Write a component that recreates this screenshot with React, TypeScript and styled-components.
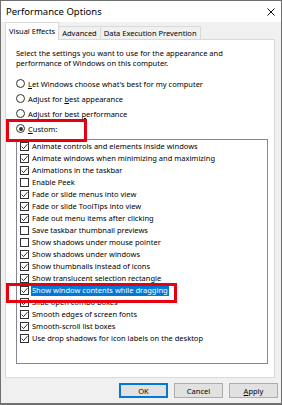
import styled, { createGlobalStyle } from "styled-components"

const GlobalStyle = createGlobalStyle`
  html, body {
    margin: 0;
    padding: 0;
    background: #ffffff;
  }
  body {
    font-family: "Noto Sans", "Open Sans", sans-serif;
    color: #000;
  }
`

const Window = styled.div`
  position: relative;
  box-sizing: border-box;
  width: 282px;
  height: 405px;
  border: 1px solid #6f6f6f;
  border-bottom-width: 2px;
  background: #f0f0f0;
  display: flex;
  flex-direction: column;
  overflow: hidden;
`

const TitleBar = styled.div`
  height: 21px;
  background: #ffffff;
  display: flex;
  align-items: center;
  justify-content: space-between;
  padding: 0 6px 0 5px;
  font-size: 9.5px;
`

const Body = styled.div`
  flex: 1;
  display: flex;
  flex-direction: column;
  padding: 1px 3px 0 4px;
`

const Tabs = styled.div`
  display: flex;
  align-items: flex-end;
  height: 17px;
  margin-bottom: -1px;
  position: relative;
  z-index: 1;
`

const Tab = styled.div<{ $active?: boolean }>`
  box-sizing: border-box;
  height: ${(p) => (p.$active ? "18px" : "14px")};
  padding: 0 3px;
  display: flex;
  align-items: center;
  justify-content: center;
  font-size: 7.5px;
  white-space: nowrap;
  background: ${(p) => (p.$active ? "#ffffff" : "#f0f0f0")};
  border: 1px solid #d9d9d9;
  border-bottom: ${(p) => (p.$active ? "none" : "1px solid #d9d9d9")};
  margin-left: ${(p) => (p.$active ? "0" : "-1px")};
  padding-bottom: ${(p) => (p.$active ? "2px" : "0")};
`

const Panel = styled.div`
  box-sizing: border-box;
  height: 339px;
  margin-right: 3px;
  background: #ffffff;
  border: 1px solid #d9d9d9;
  padding: 8px 6px 0 10px;
  display: flex;
  flex-direction: column;
`

const Intro = styled.p`
  margin: 0 0 8px;
  font-size: 7.5px;
  line-height: 10px;
`

const RadioRow = styled.div`
  height: 15px;
  display: flex;
  align-items: center;
  gap: 3px;
  font-size: 7.5px;
`

const Radio = styled.span<{ $on?: boolean }>`
  box-sizing: border-box;
  width: 9px;
  height: 9px;
  border-radius: 50%;
  border: 1px solid #333;
  background: #fff;
  display: flex;
  align-items: center;
  justify-content: center;

  &::after {
    content: "";
    width: 4px;
    height: 4px;
    border-radius: 50%;
    background: ${(p) => (p.$on ? "#333" : "transparent")};
  }
`

const Key = styled.span`
  text-decoration: underline;
`

const List = styled.div`
  box-sizing: border-box;
  margin-top: 3px;
  height: 225px;
  border: 1px solid #828790;
  padding: 0 0 0 3px;
`

const Item = styled.div`
  height: 12px;
  display: flex;
  align-items: center;
  gap: 2px;
  font-size: 7.5px;
  white-space: nowrap;
`

const Box = styled.span`
  box-sizing: border-box;
  flex: none;
  width: 9px;
  height: 9px;
  border: 1px solid #333;
  background: #fff;
  display: flex;
  align-items: center;
  justify-content: center;
`

const Label = styled.span<{ $selected?: boolean }>`
  padding: 0 1px;
  line-height: 11px;
  background: ${(p) => (p.$selected ? "#0078d7" : "transparent")};
  color: ${(p) => (p.$selected ? "#fff" : "#000")};
`

const Footer = styled.div`
  display: flex;
  justify-content: flex-end;
  gap: 6px;
  padding-top: 5px;
`

const Button = styled.button<{ $default?: boolean }>`
  box-sizing: border-box;
  width: 49px;
  height: 15px;
  padding: 0;
  font-family: inherit;
  font-size: 7.5px;
  color: #000;
  background: #e1e1e1;
  border: ${(p) => (p.$default ? "1px solid #0078d7" : "1px solid #adadad")};
  box-shadow: ${(p) => (p.$default ? "inset 0 0 0 1px #0078d7" : "none")};
`

const Marker = styled.div<{ $x: number; $y: number; $w: number; $h: number }>`
  position: absolute;
  left: ${(p) => p.$x}px;
  top: ${(p) => p.$y}px;
  width: ${(p) => p.$w}px;
  height: ${(p) => p.$h}px;
  box-sizing: border-box;
  border: 3px solid #e8000e;
  pointer-events: none;
`

const items = [
  { text: "Animate controls and elements inside windows", on: true },
  { text: "Animate windows when minimizing and maximizing", on: true },
  { text: "Animations in the taskbar", on: true },
  { text: "Enable Peek", on: false },
  { text: "Fade or slide menus into view", on: true },
  { text: "Fade or slide ToolTips into view", on: true },
  { text: "Fade out menu items after clicking", on: true },
  { text: "Save taskbar thumbnail previews", on: false },
  { text: "Show shadows under mouse pointer", on: false },
  { text: "Show shadows under windows", on: true },
  { text: "Show thumbnails instead of icons", on: true },
  { text: "Show translucent selection rectangle", on: true },
  { text: "Show window contents while dragging", on: true, selected: true },
  { text: "Slide open combo boxes", on: true },
  { text: "Smooth edges of screen fonts", on: true },
  { text: "Smooth-scroll list boxes", on: true },
  { text: "Use drop shadows for icon labels on the desktop", on: true },
]

function Check() {
  return (
    <svg width="7" height="7" viewBox="0 0 7 7">
      <path d="M0.6 3.6 L2.6 5.6 L6.4 1.2" fill="none" stroke="#333" strokeWidth="1" />
    </svg>
  )
}

function CloseIcon() {
  return (
    <svg width="8" height="8" viewBox="0 0 8 8">
      <path d="M0.5 0.5 L7.5 7.5 M7.5 0.5 L0.5 7.5" stroke="#111" strokeWidth="1" />
    </svg>
  )
}

export default function App() {
  return (
    <>
      <GlobalStyle />
      <Window>
        <TitleBar>
          <span>Performance Options</span>
          <CloseIcon />
        </TitleBar>
        <Body>
          <Tabs>
            <Tab $active>Visual Effects</Tab>
            <Tab>Advanced</Tab>
            <Tab>Data Execution Prevention</Tab>
          </Tabs>
          <Panel>
            <Intro>
              Select the settings you want to use for the appearance and
              <br />
              performance of Windows on this computer.
            </Intro>
            <RadioRow>
              <Radio />
              <span>
                <Key>L</Key>et Windows choose what's best for my computer
              </span>
            </RadioRow>
            <RadioRow>
              <Radio />
              <span>
                Adjust for <Key>b</Key>est appearance
              </span>
            </RadioRow>
            <RadioRow>
              <Radio />
              <span>
                Adjust for best <Key>p</Key>erformance
              </span>
            </RadioRow>
            <RadioRow>
              <Radio $on />
              <span>
                <Key>C</Key>ustom:
              </span>
            </RadioRow>
            <List>
              {items.map((it) => (
                <Item key={it.text}>
                  <Box>{it.on && <Check />}</Box>
                  <Label $selected={it.selected}>{it.text}</Label>
                </Item>
              ))}
            </List>
          </Panel>
          <Footer>
            <Button $default>OK</Button>
            <Button>Cancel</Button>
            <Button>
              <Key>A</Key>pply
            </Button>
          </Footer>
        </Body>
        <Marker $x={5} $y={118} $w={81} $h={23} />
        <Marker $x={5} $y={282} $w={171} $h={20} />
      </Window>
    </>
  )
}
